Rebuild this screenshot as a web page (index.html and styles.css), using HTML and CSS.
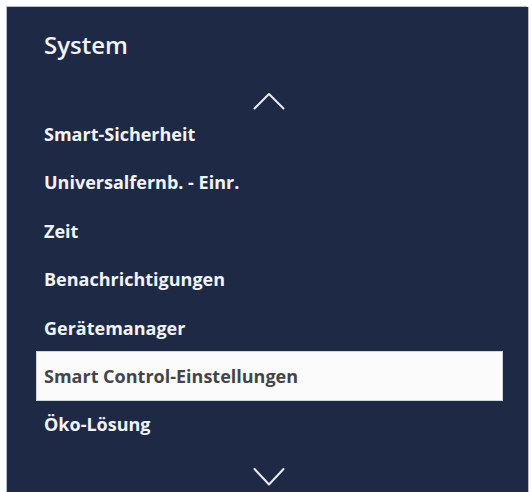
FILE: index.html
```html
<!DOCTYPE html>
<html lang="de">
<head>
<meta charset="utf-8">
<title>System</title>
<link rel="stylesheet" href="styles.css">
</head>
<body>
<div class="panel">
  <h1 class="title">System</h1>
  <div class="chev chev-up">
    <svg width="32" height="18" viewBox="0 0 32 18"><polyline points="1.5,16.5 16,2 30.5,16.5" fill="none" stroke="#e8eaee" stroke-width="2" stroke-linecap="round" stroke-linejoin="round"/></svg>
  </div>
  <ul class="menu">
    <li class="item">Smart-Sicherheit</li>
    <li class="item">Universalfernb. - Einr.</li>
    <li class="item">Zeit</li>
    <li class="item">Benachrichtigungen</li>
    <li class="item">Gerätemanager</li>
    <li class="item selected">Smart Control-Einstellungen</li>
    <li class="item">Öko-Lösung</li>
  </ul>
  <div class="chev chev-down">
    <svg width="32" height="20" viewBox="0 0 32 20"><polyline points="1.5,2 16,17.5 30.5,2" fill="none" stroke="#e8eaee" stroke-width="2" stroke-linecap="round" stroke-linejoin="round"/></svg>
  </div>
</div>
</body>
</html>
```
FILE: styles.css
```css
html, body {
  margin: 0;
  padding: 0;
  background: #ffffff;
}
body {
  font-family: "Open Sans", "Noto Sans", sans-serif;
  padding: 7px 4px 0 7px;
  height: 492px;
  box-sizing: border-box;
  overflow: hidden;
}
.panel {
  background: #1e2a45;
  width: 521px;
  height: 500px;
  padding-top: 22px;
  box-sizing: border-box;
  box-shadow: -1px -1px 0 0 #b9bdc6, 1px 0 0 0 #b9bdc6;
}
.title {
  margin: 0;
  padding-left: 37px;
  font-size: 24px;
  font-weight: 600;
  line-height: 32px;
  color: #f2f3f5;
}
.chev {
  display: flex;
  justify-content: center;
  padding-left: 3px;
}
.chev svg {
  display: block;
}
.chev-up {
  margin-top: 31px;
}
.chev-down {
  margin-top: 18px;
}
.menu {
  list-style: none;
  margin: 0 26px 0 30px;
  padding: 0;
}
.item {
  height: 48.4px;
  line-height: 48.4px;
  padding-left: 7px;
  font-size: 18px;
  font-weight: 700;
  color: #f2f3f5;
  white-space: nowrap;
}
.item.selected {
  background: #fbfbfb;
  color: #454545;
  box-shadow: 0 0 0 1px #cfd3da;
}
```
